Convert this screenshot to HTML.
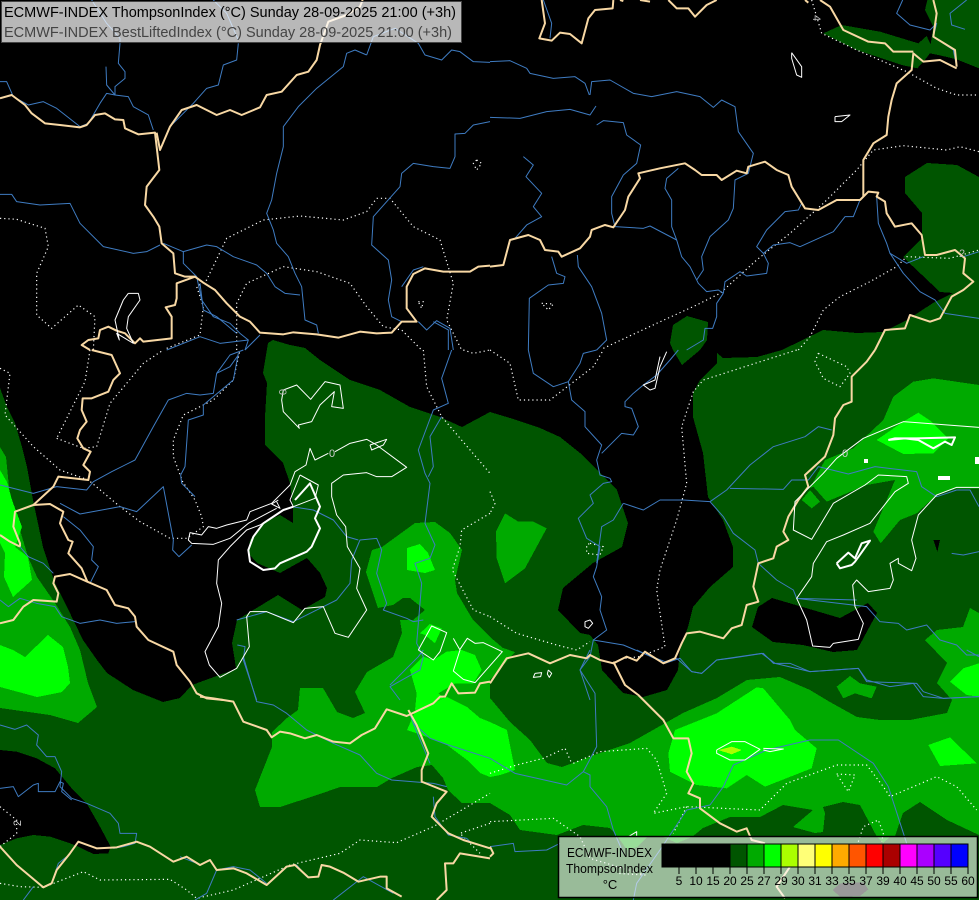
<!DOCTYPE html>
<html><head><meta charset="utf-8"><style>
html,body{margin:0;padding:0;background:#000;width:979px;height:900px;overflow:hidden}
svg{display:block;font-family:"Liberation Sans",sans-serif}
polyline{fill:none;vector-effect:non-scaling-stroke;stroke-linejoin:round}
.f polygon{shape-rendering:crispEdges}
.r polyline{stroke:#3f7cc2;stroke-width:1}
.b polyline{stroke:#f8d8a4;stroke-width:2}
.d polyline{stroke:#fff;stroke-width:1.2;stroke-dasharray:1.2 3}
.w polyline{stroke:#fff;stroke-width:1}
.t polyline{stroke:#fff;stroke-width:2}
.k{fill:#000}.g1{fill:#005500}.g2{fill:#00aa00}.g3{fill:#00ff00}.g4{fill:#aaff00}
</style></head><body>
<svg width="979" height="900" viewBox="0 0 979 900" xmlns="http://www.w3.org/2000/svg">
<rect width="979" height="900" fill="#000"/>
<g class="f">
<polygon class="g1" points="0,388 7,407 15,423 22,447 27,467 33,500 43,547 55,583 67,607 83,640 97,660 107,673 133,690 163,702 180,698 192,685 233,670 236,668 232,643 237,620 250,612 278,595 302,610 325,597 327,588 320,573 307,558 280,573 257,563 248,553 250,540 263,523 280,515 293,523 293,508 290,483 283,463 265,445 265,417 267,383 263,373 268,343 273,340 290,345 305,348 320,360 350,380 380,390 410,407 440,417 462,427 490,412 510,418 540,428 560,437 580,453 600,473 617,490 628,523 622,547 593,563 563,588 558,610 580,633 590,635 598,645 602,670 623,693 643,697 667,690 678,670 680,650 688,627 693,607 710,587 733,567 733,547 723,520 708,497 703,453 693,417 693,393 700,380 717,363 717,353 723,358 757,357 782,350 823,330 857,333 883,332 907,320 933,303 953,293 940,292 903,257 922,238 922,213 905,193 905,177 927,163 957,165 979,177 979,900 0,900"/>
<polygon class="k" points="772,598 840,618 868,603 877,613 857,650 833,652 803,645 773,642 752,627 758,607"/>
<polygon class="g1" points="670,343 673,325 687,316 708,322 707,340 700,350 682,365 673,350"/>
<g transform="translate(490,0) scale(.33333)"><polygon class="g1" points="1000,100 1055,75 1170,95 1285,130 1310,108 1322,133 1330,80 1305,30 1312,0 1467,0 1467,205 1400,178 1345,165 1320,160 1300,185 1282,205 1235,195 1100,150"/></g>
<g transform="translate(0,650) scale(.33333)"><polygon class="k" points="0,300 50,305 110,325 165,355 215,415 260,460 300,530 332,590 325,610 280,612 235,590 210,580 150,560 100,555 50,565 0,585"/></g>
<g transform="translate(490,350) scale(.33333)"><polygon class="k" points="1330,570 1350,570 1342,605"/></g>
<g transform="translate(490,650) scale(.33333)"><polygon class="k" points="1028,720 1050,700 1120,697 1135,718 1110,738 1050,740"/></g>
<polygon class="g2" points="0,447 6,457 10,497 20,530 28,557 37,577 55,603 70,627 80,650 88,683 97,707 78,723 50,715 0,708"/>
<polygon class="g2" points="366,572 372,550 382,547 415,523 435,522 450,533 462,550 455,580 457,593 473,620 490,637 503,648 515,652 490,680 490,698 510,722 530,740 547,763 562,767 600,753 630,743 653,730 683,713 717,698 747,680 780,677 810,690 830,702 857,717 880,720 910,720 947,713 952,700 937,683 947,663 925,640 937,630 963,627 970,608 979,613 979,835 947,820 920,802 903,813 895,836 890,837 883,843 877,837 860,805 843,802 823,807 825,813 823,832 815,833 793,827 813,810 783,805 760,817 730,817 703,828 692,837 677,843 663,837 647,837 637,847 627,850 618,837 610,828 583,825 557,835 520,830 510,815 490,803 462,803 448,790 443,778 432,765 417,767 392,778 377,787 340,787 317,795 280,807 260,807 255,790 272,747 272,732 287,718 298,710 300,688 323,688 337,712 353,718 365,713 355,692 367,672 393,657 402,633 400,620 413,620 425,610 410,598 403,598 393,605 378,608"/>
<g transform="translate(490,350) scale(.33333)">
<polygon class="g2" points="45,490 85,515 130,515 170,535 105,655 45,700 20,625 18,545"/>
<polygon class="g2" points="960,415 1005,330 1090,295 1180,210 1210,140 1270,95 1330,85 1467,105 1467,415 1400,415 1340,435 1280,490 1230,510 1172,580 1150,545 1190,450 1215,390 1130,405 1010,455 970,410"/>
<polygon class="g2" points="935,450 960,420 990,455 965,475"/>
<polygon class="g3" points="1160,270 1240,215 1285,188 1325,215 1375,265 1330,310 1240,312"/>
</g>
<g transform="translate(490,650) scale(.33333)">
<polygon class="g2" points="1040,110 1080,78 1110,100 1160,110 1145,145 1095,130 1060,145"/>
<polygon class="g3" points="555,240 680,190 800,112 820,115 900,210 915,240 980,295 965,355 825,410 770,375 710,415 620,405 540,365 535,310"/>
<polygon class="g4" points="685,300 725,290 755,300 725,313"/>
<polygon class="g3" points="1315,285 1380,262 1460,340 1350,348"/>
<polygon class="g3" points="1380,95 1420,55 1467,40 1467,140 1430,135"/>
</g>
<polygon class="g3" points="0,470 7,482 12,500 22,527 15,547 28,557 32,580 13,597 4,577 5,553 0,543"/>
<polygon class="g3" points="0,645 13,650 25,657 48,635 63,647 68,667 70,683 62,692 37,697 0,687"/>
<polygon class="g3" points="407,548 420,544 428,553 435,570 425,573 407,570"/>
<g transform="translate(380,600) scale(.33333)">
<polygon class="g3" points="120,100 150,72 185,85 165,130 135,105"/>
<polygon class="g3" points="130,170 90,210 110,280 105,330 130,320 190,295 175,280 225,250 280,250 305,210 285,165 245,150 200,155 160,180"/>
</g>
<polygon class="g3" points="417,707 433,703 447,697 467,707 480,718 490,722 507,730 515,770 500,775 490,777 480,773 467,760 447,745 427,737 407,730"/>
</g>

<g class="d">
<g transform="scale(.33333)">
<polyline points="0,655 50,658 135,685 145,740 110,820 110,945 155,985 235,915 285,950 280,1050"/>
<polyline points="500,1045 600,1005 610,920 590,860 620,840 680,715 790,660 900,648 1030,660 1100,635 1130,595 1170,595 1240,680 1320,720 1360,850 1340,960 1385,1050"/>
<polyline points="710,1050 710,910 740,850 850,800 950,815 1050,850 1100,920 1150,980 1205,990 1265,1050"/>
<polyline points="1255,905 1270,905 1265,925 1255,905"/>
<polyline points="1430,480 1445,490 1430,510 1420,490 1430,480"/>
</g>
<g transform="translate(490,0) scale(.33333)">
<polyline points="965,0 995,100 1100,150 1250,215 1340,265 1400,285 1467,285"/>
<polyline points="340,1045 500,970 620,915 690,880 800,780 900,700 1000,610 1100,510 1150,450 1240,437 1370,450 1410,440 1467,455"/>
<polyline points="925,1050 960,1010 1000,930 1050,890 1140,845 1220,800 1250,770 1380,775 1467,750"/>
<polyline points="155,910 190,912 175,930 155,910"/>
</g>
<g transform="translate(0,350) scale(.33333)">
<polyline points="0,55 30,70 15,195 100,290 180,360 265,390 360,470 420,515 510,565 560,565 610,530 605,500 585,450 548,395 520,320 520,270 550,195 640,150 700,90 720,0"/>
<polyline points="170,265 250,295 290,290 330,160 430,40 490,0"/>
<polyline points="270,0 255,95 170,265"/>
<polyline points="1270,0 1280,110 1325,200 1470,370"/>
<polyline points="1470,490 1385,540 1380,590 1357,660 1420,780 1470,800"/>
<polyline points="1390,0 1420,10 1470,0"/>
</g>
<g transform="translate(490,350) scale(.33333)">
<polyline points="0,425 15,460 0,490"/>
<polyline points="0,0 60,40 85,150 180,150 310,50 340,0"/>
<polyline points="920,0 640,90 610,125 575,230 590,400 560,510 510,660 500,720 525,890 450,920 400,925"/>
<polyline points="985,10 1070,50 1080,70 1050,110 1000,85 975,35 985,10"/>
<polyline points="0,800 80,850 200,885 260,900 300,875"/>
<polyline points="300,580 340,590 330,615 290,610 290,585 300,580"/>
</g>
<g transform="translate(0,650) scale(.33333)">
<polyline points="0,700 60,710 130,712 250,665 300,690 510,688 560,720 590,745 700,720 870,645 1020,610 1080,570 1190,578 1300,530 1470,430"/>
<polyline points="0,470 50,510 50,550 0,590"/>
<polyline points="1470,520 1380,550 1440,610"/>
</g>
<g transform="translate(490,650) scale(.33333)">
<polyline points="0,370 80,345 160,325 225,295 245,340"/>
<polyline points="250,340 330,305 470,295 500,330 530,430 490,490 590,470 810,480 890,400 1040,345 1130,345 1180,410 1200,440 1340,380 1400,410 1460,480"/>
<polyline points="1040,372 1095,375 1075,425 1040,372"/>
<polyline points="0,515 190,505 270,560 300,625 465,675 380,670"/>
<polyline points="590,470 550,550"/>
<polyline points="1105,575 1120,530 1165,510 1180,550 1175,575"/>
</g>
</g>

<g class="r">
<g transform="scale(.33333)">
<polyline points="360,130 355,190 375,215 375,235 345,260 345,285 320,255 318,200"/>
<polyline points="345,285 385,290 400,320 445,345 460,390"/>
<polyline points="0,245 20,245 40,290 85,315 130,305 170,325 240,380"/>
<polyline points="240,380 265,370 300,310 320,280 345,285"/>
<polyline points="480,450 510,380 580,310 620,265 655,255 670,195 710,180 715,130"/>
<polyline points="640,0 680,40 715,120"/>
<polyline points="275,0 320,70 360,115 360,130"/>
<polyline points="1100,165 1120,110 1185,85 1255,130 1275,165 1325,180 1355,150 1380,155 1420,185 1470,187"/>
<polyline points="1100,165 1065,150 1040,160 1030,200 950,265 895,320 850,380 850,440 830,520 815,600 800,640 820,690 830,730 865,770 885,820 905,860 915,960 950,975 955,1000"/>
<polyline points="0,583 35,583 50,605 120,615 210,610 240,670 310,740 400,760 440,755 480,735"/>
<polyline points="490,730 550,755 620,735 650,740 700,770 770,795 800,820 825,860 855,880 900,885"/>
<polyline points="550,755 550,790 590,830 605,900 640,950 690,970 720,1000 745,1020 735,1050"/>
<polyline points="1470,365 1420,375 1395,400 1365,402 1365,470 1350,505 1300,500 1240,490 1205,520 1200,560 1120,650 1115,735 1165,780 1175,840 1165,900 1175,950 1205,965"/>
<polyline points="1205,860 1240,810 1270,800"/>
<polyline points="1255,965 1280,990 1310,962 1350,985 1360,1050"/>
<polyline points="1300,965 1345,990 1345,1050"/>
<polyline points="500,1050 600,1010 660,1030 745,1020"/>
<polyline points="735,1050 780,1005"/>
<polyline points="600,850 610,930 650,950 710,1000"/>
</g>
<g transform="translate(490,0) scale(.33333)">
<polyline points="160,0 185,70 180,115"/>
<polyline points="0,185 60,182 110,205 120,220 190,235 255,230 285,250 298,285"/>
<polyline points="300,285 305,245 360,240 430,280 485,290 560,275 630,290 670,322 695,300 735,320 745,395 790,460 775,520 735,540 730,625 715,660 660,710 635,770 640,810 620,840"/>
<polyline points="0,352 90,355 170,335 240,328 300,345 318,318"/>
<polyline points="320,375 340,362 400,368 410,405 452,435 440,490 400,525 365,590 365,640 375,680 460,685 480,678 560,720"/>
<polyline points="100,470 130,495 108,530 155,580 130,620 155,650 110,675 75,715"/>
<polyline points="565,505 530,535 525,565 545,600 545,680 560,720 575,770 600,800 625,850 650,875 685,870 700,880"/>
<polyline points="185,770 200,820 225,830 220,850 175,855 118,895 115,1050"/>
<polyline points="262,765 265,800 305,860 335,940 350,1020 320,1050"/>
<polyline points="700,880 705,845 750,815 770,828 830,820 835,790 820,760 800,740 830,690 885,635 925,630 935,610"/>
<polyline points="820,760 850,735 900,728 930,740 1030,695 1065,650 1090,650 1110,600"/>
<polyline points="700,880 680,910 680,950 668,985 645,985 640,1020 590,1050"/>
<polyline points="1160,590 1165,670 1190,730 1200,760 1240,820 1290,875 1335,900 1365,940 1467,955"/>
<polyline points="1200,760 1250,790 1300,770"/>
<polyline points="1467,755 1420,770"/>
<polyline points="1238,0 1220,40 1260,75 1320,90 1340,70 1330,110 1390,150 1400,200"/>
<polyline points="1430,0 1380,40 1385,75 1425,88"/>
</g>
<g transform="translate(0,350) scale(.33333)">
<polyline points="730,0 690,15 650,70 640,130 600,135 560,130 505,150 460,230 405,330 335,365 280,395 260,420 170,410 100,430 0,405"/>
<polyline points="715,15 690,50 650,70"/>
<polyline points="715,10 700,90 610,165 610,195 565,210 555,350 542,375 545,400 585,440"/>
<polyline points="180,460 240,492 360,470 410,485 490,410 520,570 518,600 537,620 575,585"/>
<polyline points="190,500 240,540 280,590 275,630 295,650 270,700"/>
<polyline points="0,750 25,770 60,745 110,760 165,770 185,800 240,820 300,810 350,820 405,815"/>
<polyline points="60,590 85,620 130,640 160,670"/>
<polyline points="1355,0 1325,85 1345,160 1300,180 1255,300 1275,370 1290,400 1275,520 1305,585 1290,625 1245,640 1265,700 1255,820 1250,880 1270,920 1260,960 1170,1010 1200,1050"/>
<polyline points="1325,200 1290,260 1300,350 1285,380"/>
<polyline points="710,810 800,785 880,815 970,770 1010,750 1050,700 1055,630 1080,570 1130,565 1145,600 1130,670 1160,760 1150,780 1220,805 1240,815 1270,810"/>
<polyline points="875,470 940,480 1000,510 1040,560 1075,570"/>
<polyline points="712,885 735,890 730,930 770,1050"/>
</g>
<g transform="translate(490,350) scale(.33333)">
<polyline points="115,0 130,70 190,110 235,95 245,150 285,185 285,230 335,285 320,330 330,375 360,385 365,395 340,400 300,435 310,460 265,505 290,565 330,590 320,650 310,680 335,740 330,780 350,840 310,870 300,920 270,960 300,1050"/>
<polyline points="235,95 270,40 280,10 320,0"/>
<polyline points="565,0 540,30 500,75 460,105 430,130 405,155 405,170 425,175 445,230 430,255 395,250 350,295 335,310"/>
<polyline points="400,460 460,480 510,450 580,450 660,455 710,420 780,345 850,290 945,260 985,230 1025,240"/>
<polyline points="660,455 700,500 730,550 795,600 805,640 860,690 910,720 920,745 1100,750"/>
<polyline points="720,415 880,418 905,390 955,390 985,350 1075,372 1155,350 1280,365 1295,410 1340,440 1400,420 1440,420 1467,470"/>
<polyline points="400,460 370,510 335,530 320,640"/>
<polyline points="310,870 400,885 460,910 525,935 560,925 605,965 635,970 680,930 720,925 820,910 850,940 900,940 960,965 1105,955 1130,990 1200,1010 1270,1000 1300,1040 1360,1045 1467,1040"/>
<polyline points="920,745 1130,770 1170,815 1225,820 1250,840 1310,825 1350,870 1400,885 1430,915 1467,915"/>
<polyline points="1385,610 1420,615 1467,605"/>
</g>
<g transform="translate(0,650) scale(.33333)">
<polyline points="0,225 45,238 80,225 115,255 110,285 140,320 165,320 185,365 180,410 215,445 260,460 330,490 355,520 360,550 410,550 405,580 370,590 340,595"/>
<polyline points="0,415 40,410 55,440 100,405 115,400 115,425 165,425 180,395 190,400 185,425 215,450"/>
<polyline points="155,700 175,640 200,620"/>
<polyline points="730,20 770,155 820,165 860,190 920,240 1000,280 1080,315 1130,370 1175,390 1300,400 1340,410"/>
<polyline points="1170,105 1255,20 1270,0"/>
<polyline points="1225,180 1240,220 1290,265 1345,285 1470,325"/>
<polyline points="1240,220 1290,340"/>
<polyline points="1300,440 1305,500 1345,555 1400,565 1415,580"/>
<polyline points="540,620 590,640"/>
<polyline points="650,660 700,650 750,660 800,700"/>
<polyline points="650,660 620,730 585,750"/>
<polyline points="70,750 100,710"/>
<polyline points="860,650 890,645 920,680"/>
<polyline points="1000,750 1090,680 1180,730"/>
</g>
<g transform="translate(490,650) scale(.33333)">
<polyline points="0,325 75,370 230,405 280,365 320,290 315,130 270,60 300,0"/>
<polyline points="280,365 300,375 300,410 350,470 370,540 400,610"/>
<polyline points="440,0 525,40 570,25 605,65 635,70 680,30 815,10 855,40 960,65 1105,55 1130,95 1280,100 1300,125 1360,145 1467,140"/>
<polyline points="660,465 700,410 730,345 830,300 960,270 1045,270 1150,340 1195,410 1250,580"/>
<polyline points="660,465 590,480 540,555 510,600 440,700 430,750"/>
<polyline points="0,590 70,580 75,605 170,600 210,580"/>
<polyline points="1430,0 1467,20"/>
</g>
</g>

<g class="b">
<g transform="scale(.33333)">
<polyline points="0,295 35,285 75,315 95,340 135,370 180,375 240,382 260,375 285,345 315,340 345,358 370,360 375,385 415,403 465,398 472,458 478,510 440,560 435,615 460,650 478,680 485,730 520,760 525,820 555,830 585,830 610,848 645,870 680,910 720,950 750,965 780,998 850,1003 880,997 950,1003 1015,1013 1080,995 1130,1000 1175,998 1205,965 1250,965 1220,925 1220,860 1240,822 1275,805 1330,815 1410,815 1435,800 1470,797"/>
<polyline points="470,398 480,450 510,380 545,330 590,315 650,345 690,330 725,345 780,322 800,285 845,275 890,225 925,215 950,180 960,135 985,65 1040,45 1080,20 1088,0"/>
<polyline points="585,830 530,850 530,895 525,915 497,922 515,950 515,1015 430,1025 420,1015 405,1030 375,1000 350,992 325,980 300,990 295,1015 265,1020 245,1035 270,1050"/>
</g>
<g transform="translate(0,350) scale(.33333)">
<polyline points="275,0 335,15 360,70 340,90 325,125 275,145 248,145 245,180 260,215 240,240 232,265 250,295 272,305 250,345 270,365 265,390 175,380 160,410 100,465 45,485 40,530 60,580 60,590"/>
<polyline points="0,555 30,575 60,590"/>
<polyline points="100,465 150,462 190,485 180,520 205,570 218,575 205,610 245,655 262,695 320,720 345,765 385,775 405,800 410,830 445,870 520,905 530,945 570,995 590,1030 620,1045 670,1050"/>
<polyline points="0,820 40,810 70,770 100,750 170,755 175,730 160,700 165,680 210,672 262,695"/>
</g>
<g transform="translate(0,650) scale(.33333)">
<polyline points="600,140 640,145 700,155 730,215 800,240 815,262 840,245 870,250 915,265 950,255 1000,275 1050,280 1085,255 1125,235 1160,178 1220,198 1300,160 1320,140 1335,140 1355,100 1375,130 1425,128 1440,100 1470,95"/>
<polyline points="0,590 50,645 130,712 155,700 170,660 210,610 235,575 290,595 350,592 410,575 450,590 520,635 560,620 600,645 630,630 650,660 700,655 740,670 800,705 860,650 885,645 925,682 955,680 965,645 990,650 1030,668 1075,695 1140,680 1160,680 1160,715 1205,740"/>
<polyline points="1225,180 1250,225 1285,310 1265,360 1265,395 1290,405 1340,425 1310,460 1295,500 1345,550 1390,570 1470,595"/>
<polyline points="1470,625 1380,610 1360,640 1335,640 1340,720 1310,750"/>
</g>
<g transform="translate(490,350) scale(.33333)">
<polyline points="0,1000 50,925 115,910 180,940 240,915 290,925 300,915 330,930 370,940 410,920 440,932 465,905 520,940 555,925 575,880 590,850 630,845 700,865 725,835 755,825 770,765 805,755 790,710 805,640 850,625 860,590 895,570 880,545 895,500 925,450 955,410 945,375 1005,320 1030,255 1035,205 1060,165 1085,155 1085,80 1130,35 1155,0"/>
</g>
<g transform="translate(490,0) scale(.33333)">
<polyline points="1155,1050 1185,990 1245,985 1260,945 1320,965 1350,955 1385,890 1420,870 1450,845 1420,820 1425,775 1395,750 1340,765 1305,765 1295,705 1265,670 1215,680 1190,640 1185,605 1160,590 1165,578 1135,575 1110,600 1040,600 985,630 945,625 905,560 895,525 860,510 825,485 775,500 770,520 740,512 695,540 680,525 635,525 615,510 585,490 510,505 445,520 450,535 415,590 405,630 370,682 345,675 305,690 300,710 270,745 215,770 205,755 165,750 150,720 115,705 60,720 40,795 0,800"/>
<polyline points="1120,590 1120,480 1150,430 1190,405 1195,350 1205,300 1220,250 1265,210 1270,160 1300,185 1350,180 1400,205"/>
<polyline points="1270,155 1210,155 1185,130 1135,125 1060,90 1020,20 990,0"/>
<polyline points="1330,0 1340,40 1330,110 1395,150 1400,200"/>
<polyline points="155,0 165,70 148,115 185,122 210,98 240,102 275,130 295,55 315,30 368,25 370,0"/>
<polyline points="535,0 560,25 595,25 615,50 650,15 680,0"/>
<polyline points="390,0 400,3"/>
<polyline points="450,0 480,5"/>
<polyline points="945,0 955,8"/>
</g>
<g transform="translate(490,650) scale(.33333)">
<polyline points="370,35 405,105 445,135 520,210 550,265 595,265 605,310 590,365 610,400 595,430 630,445 630,475 690,520 740,545 770,535 785,570 825,580"/>
<polyline points="0,590 10,610 0,620"/>
<polyline points="900,650 860,710 885,745"/>
</g>
</g>

<g class="w">
<g transform="scale(.33333)">
<polyline points="385,880 415,880 420,900 385,950 380,985 400,1030 350,1000 358,1020 345,960 370,900 385,880"/>
</g>
<g transform="translate(490,0) scale(.33333)">
<polyline points="905,158 935,200 935,232 920,225 905,175 905,158"/>
<polyline points="1035,350 1080,345 1055,365 1035,365 1035,350"/>
</g>
<g transform="translate(0,350) scale(.33333)">
<polyline points="850,120 890,105 932,148 975,95 1020,105 1030,175 995,170 1003,125 960,165 935,215 895,225 898,235 850,185 845,150 850,120"/>
<polyline points="1005,305 1050,280 1100,268 1130,285 1220,352 1175,380 1130,380 1100,368 1030,375 995,400 995,440 1010,495 1037,530 1042,590 1080,655 1070,715 1100,780 1045,862 1005,850 970,770 915,775 880,818 800,785 750,785 740,800 748,890 710,955 660,982 628,945 615,905 655,830 665,760 650,700 655,630 690,590 740,540 780,525 850,480"/>
<polyline points="985,310 945,330 930,295 918,345 885,365 870,405 830,445 815,460 750,485 740,510 680,525 650,535 625,530 605,555 570,548 565,570 575,580 640,583 690,565 745,520 830,475"/>
<polyline points="835,450 815,462 840,475 830,455"/>
<polyline points="900,375 955,405 945,445 880,470 870,450 900,375"/>
<polyline points="1110,285 1160,268 1150,285 1115,300 1110,285"/>
</g>
<g transform="translate(380,600) scale(.33333)">
<polyline points="115,150 155,78 200,98 180,155 160,180 115,150"/>
<polyline points="220,115 240,150 220,213 250,238 285,248 367,155 310,128 285,130 262,115 240,148"/>
</g>
<g transform="translate(490,350) scale(.33333)">
<polyline points="510,20 495,90 460,105 480,120 495,115 510,50 530,5"/>
<polyline points="285,815 300,810 308,820 295,835 285,830 285,815"/>
<polyline points="1467,232 1240,215 1120,265 1040,325 1000,370 915,455 910,540 965,568 1030,460 1125,405 1165,375 1250,380 1255,400 1215,425 1140,520 1060,555 1010,575 970,640 965,680 920,745 950,810 968,888 1020,892 1030,880 1105,868 1120,820 1095,770 1088,705 1100,690 1135,725 1200,715 1210,690 1200,640 1225,625 1225,640 1265,662 1278,625 1265,570 1285,495 1340,435 1400,412 1467,412"/>
</g>
<g transform="translate(490,650) scale(.33333)">
<polyline points="680,300 725,275 765,275 810,298 765,330 720,330 680,310 680,300"/>
<polyline points="820,295 880,297 840,305 820,300"/>
<polyline points="135,70 155,68 152,80 130,82 135,70"/>
<polyline points="175,60 185,70 178,82 172,72 175,60"/>
<polyline points="415,560 440,545 440,558"/>
</g>
</g>
<g class="t">
<g transform="translate(0,350) scale(.33333)">
<polyline points="885,450 930,400 960,470 945,505 960,535 935,590 920,605 840,640 825,655 790,660 750,635 745,600 760,560 790,520 850,480 880,470"/>
</g>
<g transform="translate(490,350) scale(.33333)">
<polyline points="1040,640 1075,608 1095,625 1115,580 1140,572 1095,635 1085,645 1050,655 1040,640"/>
<polyline points="1195,270 1245,265 1285,270 1330,295 1365,275 1385,285 1395,262 1280,265 1215,265 1195,270"/>
</g>
</g>
<g fill="#fff">
<rect x="864" y="459" width="4" height="4"/>
<rect x="938" y="476" width="12" height="4"/>
<rect x="975" y="457" width="4" height="7"/>
</g>
<g font-size="11">
<text x="283" y="396" text-anchor="middle" transform="rotate(90 283 392)" fill="#bbb">0</text>
<text x="332" y="457" text-anchor="middle" fill="#ccc">0</text>
<text x="845" y="457" text-anchor="middle" fill="#ccc">0</text>
<text x="817" y="22" text-anchor="middle" transform="rotate(90 817 18)" fill="#bbb">4</text>
<text x="962" y="257" text-anchor="middle" fill="#bbb">2</text>
<text x="17" y="827" text-anchor="middle" transform="rotate(-90 17 823)" fill="#ccc">2</text>
</g>

<rect x="1.5" y="1.5" width="460" height="41" fill="#fff" fill-opacity=".72" stroke="#444" stroke-width="1"/>
<text x="4" y="17" font-size="15" textLength="452" lengthAdjust="spacingAndGlyphs" fill="#000">ECMWF-INDEX ThompsonIndex (°C) Sunday 28-09-2025 21:00 (+3h)</text>
<text x="4" y="37" font-size="15" textLength="448" lengthAdjust="spacingAndGlyphs" fill="#444">ECMWF-INDEX BestLiftedIndex (°C) Sunday 28-09-2025 21:00 (+3h)</text>

<rect x="558.5" y="836.5" width="419" height="61" fill="#fff" fill-opacity=".6" stroke="#000" stroke-width="1.5"/>
<text x="567" y="857" font-size="13" textLength="85" lengthAdjust="spacingAndGlyphs" fill="#000">ECMWF-INDEX</text>
<text x="566" y="873" font-size="13" textLength="87" lengthAdjust="spacingAndGlyphs" fill="#000">ThompsonIndex</text>
<text x="610" y="889" font-size="13" text-anchor="middle" fill="#000">°C</text>
<g shape-rendering="crispEdges" stroke="#000" stroke-width="1">
<rect x="662" y="844" width="68" height="23" fill="#000"/>
<rect x="730" y="844" width="17" height="23" fill="#005500"/>
<rect x="747" y="844" width="17" height="23" fill="#00aa00"/>
<rect x="764" y="844" width="17" height="23" fill="#00ff00"/>
<rect x="781" y="844" width="17" height="23" fill="#aaff00"/>
<rect x="798" y="844" width="17" height="23" fill="#ffff77"/>
<rect x="815" y="844" width="17" height="23" fill="#ffff00"/>
<rect x="832" y="844" width="17" height="23" fill="#ffaa00"/>
<rect x="849" y="844" width="17" height="23" fill="#ff5500"/>
<rect x="866" y="844" width="17" height="23" fill="#ff0000"/>
<rect x="883" y="844" width="17" height="23" fill="#aa0000"/>
<rect x="900" y="844" width="17" height="23" fill="#ff00ff"/>
<rect x="917" y="844" width="17" height="23" fill="#aa00ff"/>
<rect x="934" y="844" width="17" height="23" fill="#5500ff"/>
<rect x="951" y="844" width="17" height="23" fill="#0000ff"/>
<path fill="none" d="M679 867V874M696 867V874M713 867V874M730 867V874M747 867V874M764 867V874M781 867V874M798 867V874M815 867V874M832 867V874M849 867V874M866 867V874M883 867V874M900 867V874M917 867V874M934 867V874M951 867V874M968 867V874"/>
</g>
<g font-size="12" text-anchor="middle" fill="#000">
<text x="679" y="885">5</text><text x="696" y="885">10</text><text x="713" y="885">15</text><text x="730" y="885">20</text><text x="747" y="885">25</text><text x="764" y="885">27</text><text x="781" y="885">29</text><text x="798" y="885">30</text><text x="815" y="885">31</text><text x="832" y="885">33</text><text x="849" y="885">35</text><text x="866" y="885">37</text><text x="883" y="885">39</text><text x="900" y="885">40</text><text x="917" y="885">45</text><text x="934" y="885">50</text><text x="951" y="885">55</text><text x="968" y="885">60</text>
</g>
</svg>
</body></html>
